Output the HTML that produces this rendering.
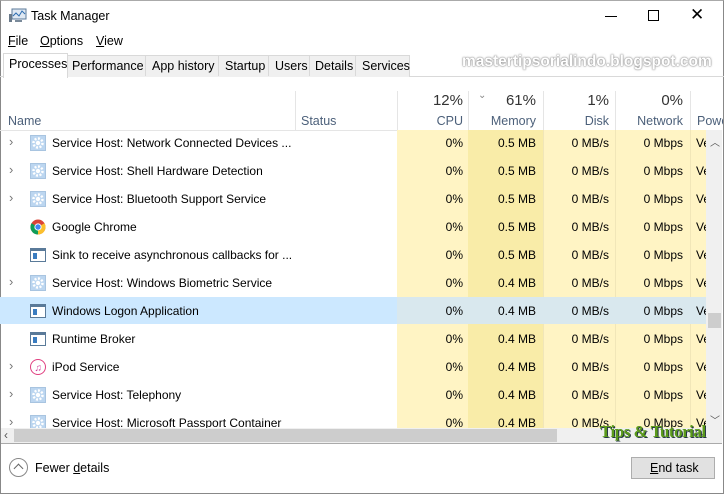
<!DOCTYPE html>
<html><head><style>
body{margin:0;width:724px;height:493px;overflow:hidden;background:#fff;font-family:"Liberation Sans",sans-serif;font-size:12px;color:#000;position:relative}
.a{position:absolute}
.row{position:absolute;left:0;width:706px;height:28px}
.row span{position:absolute;top:6px;white-space:nowrap}
.r{text-align:right}
u{text-decoration:underline}
</style></head><body>
<div class="a" style="left:0;top:0;width:722px;height:492px;border:1px solid #888;border-top:1px solid #aaa"></div>
<svg class="a" style="left:9px;top:8px" width="18" height="16"><rect x="3" y="1" width="14" height="10" fill="#dfe8f2" stroke="#5b7a99"/><polyline points="4,8 7,5 10,8 13,3 16,6" fill="none" stroke="#2b6cb0" stroke-width="1"/><rect x="0" y="6" width="3" height="8" fill="#6a7a8a"/><rect x="6" y="12" width="7" height="2" fill="#7a8a9a"/></svg>
<div class="a" style="left:31px;top:9px;font-size:12.5px">Task Manager</div>
<div class="a" style="left:605px;top:16px;width:12px;border-top:1px solid #000"></div>
<div class="a" style="left:648px;top:10px;width:9px;height:9px;border:1px solid #000"></div>
<div class="a" style="left:690px;top:5px;font-size:17px">✕</div>
<div class="a" style="left:8px;top:34px;font-size:12.5px"><u>F</u>ile</div>
<div class="a" style="left:40px;top:34px;font-size:12.5px"><u>O</u>ptions</div>
<div class="a" style="left:96px;top:34px;font-size:12.5px"><u>V</u>iew</div>
<div class="a" style="left:0;top:76px;width:724px;border-top:1px solid #d9d9d9"></div>
<div class="a" style="left:67px;top:55px;width:341px;height:21px;background:#f0f0f0;border:1px solid #d9d9d9;border-bottom:none"></div>
<div class="a" style="left:3px;top:53px;width:63px;height:24px;background:#fff;border:1px solid #d9d9d9;border-bottom:none"></div>
<div class="a" style="left:9px;top:57px;font-size:12.5px">Processes</div>
<div class="a" style="left:72px;top:59px;font-size:12.5px">Performance</div>
<div class="a" style="left:145px;top:55px;height:21px;border-left:1px solid #d9d9d9"></div>
<div class="a" style="left:152px;top:59px;font-size:12.5px">App history</div>
<div class="a" style="left:218px;top:55px;height:21px;border-left:1px solid #d9d9d9"></div>
<div class="a" style="left:225px;top:59px;font-size:12.5px">Startup</div>
<div class="a" style="left:268px;top:55px;height:21px;border-left:1px solid #d9d9d9"></div>
<div class="a" style="left:275px;top:59px;font-size:12.5px">Users</div>
<div class="a" style="left:309px;top:55px;height:21px;border-left:1px solid #d9d9d9"></div>
<div class="a" style="left:315px;top:59px;font-size:12.5px">Details</div>
<div class="a" style="left:355px;top:55px;height:21px;border-left:1px solid #d9d9d9"></div>
<div class="a" style="left:362px;top:59px;font-size:12.5px">Services</div>
<div class="a" style="left:462px;top:53px;font-size:15.5px;font-weight:bold;color:#fff;text-shadow:0 0 2px #888,0 0 1px #666;white-space:nowrap">mastertipsorialindo.blogspot.com</div>
<div class="a" style="left:295px;top:91px;height:39px;border-left:1px solid #e5e5e5"></div>
<div class="a" style="left:397px;top:91px;height:39px;border-left:1px solid #e5e5e5"></div>
<div class="a" style="left:468px;top:91px;height:39px;border-left:1px solid #e5e5e5"></div>
<div class="a" style="left:543px;top:91px;height:39px;border-left:1px solid #e5e5e5"></div>
<div class="a" style="left:615px;top:91px;height:39px;border-left:1px solid #e5e5e5"></div>
<div class="a" style="left:690px;top:91px;height:39px;border-left:1px solid #e5e5e5"></div>
<div class="a" style="left:0;top:130px;width:706px;border-top:1px solid #e5e5e5"></div>
<div class="a" style="left:8px;top:114px;color:#4c607a;font-size:12.5px">Name</div>
<div class="a" style="left:301px;top:114px;color:#4c607a;font-size:12.5px">Status</div>
<div class="a r" style="left:400px;width:63px;top:92px;font-size:15px;color:#333">12%</div>
<div class="a r" style="left:400px;width:63px;top:114px;color:#4c607a;font-size:12.5px">CPU</div>
<div class="a" style="left:478px;top:90px;color:#888;font-size:10px">⌄</div>
<div class="a r" style="left:470px;width:66px;top:92px;font-size:15px;color:#333">61%</div>
<div class="a r" style="left:470px;width:66px;top:114px;color:#4c607a;font-size:12.5px">Memory</div>
<div class="a r" style="left:545px;width:64px;top:92px;font-size:15px;color:#333">1%</div>
<div class="a r" style="left:545px;width:64px;top:114px;color:#4c607a;font-size:12.5px">Disk</div>
<div class="a r" style="left:617px;width:66px;top:92px;font-size:15px;color:#333">0%</div>
<div class="a r" style="left:617px;width:66px;top:114px;color:#4c607a;font-size:12.5px">Network</div>
<div class="a" style="left:697px;top:114px;color:#4c607a;font-size:12.5px;width:26px;overflow:hidden;white-space:nowrap">Power</div>
<div class="a" style="left:0;top:130px;width:706px;height:298px;overflow:hidden">
<div class="a" style="left:397px;top:0;width:309px;height:298px;background:#fff4c4"></div>
<div class="a" style="left:468px;top:0;width:75px;height:298px;background:#f9eca8"></div>
<div class="a" style="left:543px;top:0;height:298px;border-left:1px solid #f1e6b8"></div>
<div class="a" style="left:615px;top:0;height:298px;border-left:1px solid #f1e6b8"></div>
<div class="a" style="left:690px;top:0;height:298px;border-left:1px solid #f1e6b8"></div>
<div class="a" style="left:0;top:167px;width:397px;height:27px;background:#cce8ff"></div>
<div class="a" style="left:397px;top:167px;width:309px;height:27px;background:#d9e8ee"></div>
<div id="rows"></div>
</div>
<div class="a" style="left:706px;top:130px;width:16px;height:298px;background:#f0f0f0"></div>
<div class="a" style="left:710px;top:134px;font-size:10px;color:#555">︿</div>
<div class="a" style="left:708px;top:313px;width:13px;height:15px;background:#cdcdcd"></div>
<div class="a" style="left:710px;top:412px;font-size:10px;color:#555">﹀</div>
<div class="a" style="left:1px;top:428px;width:721px;height:15px;background:#f0f0f0"></div>
<div class="a" style="left:14px;top:429px;width:543px;height:13px;background:#cdcdcd"></div>
<div class="a" style="left:4px;top:428px;font-size:12px;color:#555">‹</div>
<div class="a" style="left:700px;top:428px;font-size:12px;color:#555">›</div>
<div class="a" style="left:1px;top:443px;width:721px;border-top:1px solid #aaa"></div>
<div class="a" style="left:600px;top:422px;font-family:'Liberation Serif',serif;font-weight:bold;font-size:17px;color:#5a9a1a;text-shadow:1px 1px 0 #234;white-space:nowrap;letter-spacing:-0.5px">Tips &amp; Tutorial</div>
<div class="a" style="left:9px;top:458px;width:17px;height:17px;border:1px solid #888;border-radius:50%"></div>
<div class="a" style="left:15px;top:465px;width:6px;height:6px;border-left:1px solid #666;border-top:1px solid #666;transform:rotate(45deg)"></div>
<div class="a" style="left:35px;top:461px;font-size:12.5px">Fewer <u>d</u>etails</div>
<div class="a" style="left:631px;top:457px;width:82px;height:20px;background:#e1e1e1;border:1px solid #adadad"></div>
<div class="a" style="left:650px;top:461px;font-size:12.5px"><u>E</u>nd task</div>
<script>
var d=[["Service Host: Network Connected Devices ...","g",1,"0.5"],["Service Host: Shell Hardware Detection","g",1,"0.5"],["Service Host: Bluetooth Support Service","g",1,"0.5"],["Google Chrome","c",0,"0.5"],["Sink to receive asynchronous callbacks for ...","w",0,"0.5"],["Service Host: Windows Biometric Service","g",1,"0.4"],["Windows Logon Application","w",0,"0.4"],["Runtime Broker","w",0,"0.4"],["iPod Service","i",1,"0.4"],["Service Host: Telephony","g",1,"0.4"],["Service Host: Microsoft Passport Container","g",1,"0.4"]];
var h="";
d.forEach(function(r,i){
var t=i*28;var ic="";
if(r[1]=="g")ic='<svg class="a" style="left:30px;top:5px" width="16" height="16"><rect x="0.5" y="0.5" width="15" height="15" fill="#bcd6f0" stroke="#a8c4e0"/><circle cx="8" cy="8" r="4.5" fill="none" stroke="#fff" stroke-width="2.5" stroke-dasharray="2 1.5"/><circle cx="8" cy="8" r="2.2" fill="#fff"/></svg>';
if(r[1]=="c")ic='<svg class="a" style="left:30px;top:5px" width="16" height="16"><circle cx="8" cy="8" r="7.5" fill="#db4437"/><path d="M8 8 L14.5 4.2 A7.5 7.5 0 0 1 8 15.5Z" fill="#fbc02d"/><path d="M8 8 L8 15.5 A7.5 7.5 0 0 1 1.5 4.2Z" fill="#0f9d58"/><circle cx="8" cy="8" r="3.6" fill="#fff"/><circle cx="8" cy="8" r="2.7" fill="#4285f4"/></svg>';
if(r[1]=="w")ic='<svg class="a" style="left:30px;top:5px" width="16" height="16"><rect x="0.5" y="1.5" width="15" height="13" fill="#fff" stroke="#5a7a99"/><rect x="1" y="2" width="14" height="2" fill="#5a7a99"/><rect x="3" y="6" width="4" height="6" fill="#3a7cc0"/></svg>';
if(r[1]=="i")ic='<svg class="a" style="left:30px;top:5px" width="16" height="16"><circle cx="8" cy="8" r="7.5" fill="#fff" stroke="#e04080"/><text x="4.5" y="12" font-size="10" fill="#d03a9a">♫</text></svg>';
h+='<div class="row" style="top:'+t+'px">'+(r[2]?'<span style="left:9px;color:#777;font-size:13px;top:4px">›</span>':'')+ic+'<span style="left:52px">'+r[0]+'</span><span class="r" style="left:400px;width:63px">0%</span><span class="r" style="left:470px;width:66px">'+r[3]+' MB</span><span class="r" style="left:545px;width:64px">0 MB/s</span><span class="r" style="left:617px;width:66px">0 Mbps</span><span style="left:696px;width:10px;overflow:hidden">Very</span></div>';
});
document.getElementById("rows").innerHTML=h;
</script>
</body></html>
